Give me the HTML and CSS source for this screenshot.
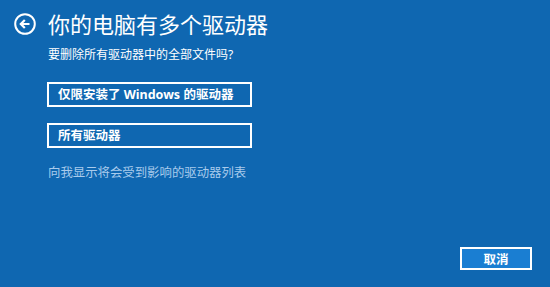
FILE: index.html
```html
<!DOCTYPE html>
<html lang="zh-CN">
<head>
<meta charset="utf-8">
<link rel="stylesheet" href="styles.css">
</head>
<body>
<div class="page">
  <div class="header">
    <svg class="back" width="22" height="22" viewBox="0 0 22 22">
      <circle cx="11" cy="11" r="9.8" fill="none" stroke="#fff" stroke-width="2"/>
      <path d="M15.5 11H7M10.8 7L6.8 11L10.8 15" fill="none" stroke="#fff" stroke-width="2.2" stroke-linecap="butt" stroke-linejoin="miter"/>
    </svg>
    <h1 class="title">你的电脑有多个驱动器</h1>
  </div>
  <div class="content">
    <p class="question">要删除所有驱动器中的全部文件吗?</p>
    <button class="option">仅限安装了 Windows 的驱动器</button>
    <button class="option option-second">所有驱动器</button>
    <a class="link">向我显示将会受到影响的驱动器列表</a>
  </div>
  <div class="footer">
    <button class="cancel">取消</button>
  </div>
</div>
</body>
</html>
```

FILE: styles.css
```css
html, body {
  margin: 0;
  padding: 0;
  height: 100%;
  background: #0f67b1;
  color: #fff;
  font-family: "Noto Sans", "Noto Sans CJK SC", sans-serif;
}
.page {
  height: 100%;
  box-sizing: border-box;
  display: flex;
  flex-direction: column;
  padding: 13px 18px 17px 14px;
}
.header {
  display: flex;
  align-items: center;
  gap: 12px;
  height: 22px;
}
.back {
  display: block;
  flex: none;
}
.title {
  margin: 0;
  font-size: 22px;
  line-height: 22px;
  font-weight: normal;
}
.content {
  display: flex;
  flex-direction: column;
  align-items: flex-start;
  padding-left: 34px;
}
.question {
  margin: 14px 0 0 0;
  font-size: 12px;
  line-height: 12px;
}
.option {
  margin: 21px 0 0 -1px;
  width: 205px;
  height: 25px;
  box-sizing: border-box;
  border: 2px solid #fff;
  background: transparent;
  color: #fff;
  font-family: inherit;
  font-size: 12.5px;
  font-weight: bold;
  text-align: left;
  padding: 0 0 0 9px;
  line-height: 19px;
}
.option-second {
  margin-top: 16px;
}
.link {
  margin-top: 19px;
  font-size: 12.4px;
  line-height: 12px;
  color: #a9cbec;
}
.footer {
  margin-top: auto;
  display: flex;
  justify-content: flex-end;
}
.cancel {
  width: 72px;
  height: 23px;
  box-sizing: border-box;
  border: 2px solid #fff;
  background: #1a7ed2;
  color: #fff;
  font-family: inherit;
  font-size: 12.5px;
  font-weight: bold;
  padding: 0;
}
```
